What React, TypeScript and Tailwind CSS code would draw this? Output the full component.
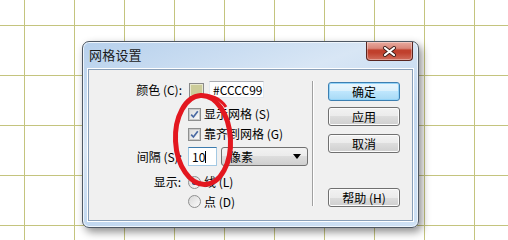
import React from 'react';

const cjk = "font-['SimSun','Noto_Sans_CJK_SC',sans-serif]";

function CheckBox() {
  return (
    <span className="w-[13px] h-[13px] shrink-0 border border-[#8e8f8f] bg-[#f4f4f4] flex items-center justify-center">
      <span className="w-[11px] h-[11px] border border-[#c9c9c9] bg-gradient-to-br from-[#dedede] to-[#f9f9f9] flex items-center justify-center">
        <svg width="9" height="9" viewBox="0 0 9 9">
          <path d="M1.2 4.6 L3.4 7 L7.8 1.2" stroke="#4b6aa3" strokeWidth="1.7" fill="none" />
        </svg>
      </span>
    </span>
  );
}

function Radio({ checked }: { checked?: boolean }) {
  return (
    <span className="w-[13px] h-[13px] shrink-0 rounded-full border border-[#8e8f8f] bg-gradient-to-br from-[#d8d8d8] to-[#fbfbfb] flex items-center justify-center">
      {checked && <span className="w-[5px] h-[5px] rounded-full bg-[#1d3f78]" />}
    </span>
  );
}

function Button({ label, primary }: { label: string; primary?: boolean }) {
  return (
    <div
      className={
        primary
          ? 'w-[72px] h-[19px] rounded-[3px] border border-[#3c7fb1] bg-[linear-gradient(#eaf6fd_0%,#d9f0fc_50%,#bee6fd_50%,#a7d9f5_100%)] shadow-[inset_0_0_0_1px_#94d4f8] flex items-center justify-center text-[12px] leading-none text-black'
          : 'w-[72px] h-[19px] rounded-[3px] border border-[#707070] bg-[linear-gradient(#f2f2f2_0%,#ebebeb_50%,#dddddd_50%,#cfcfcf_100%)] shadow-[inset_0_0_0_1px_#fcfcfc] flex items-center justify-center text-[12px] leading-none text-black'
      }
    >
      {label}
    </div>
  );
}

export default function App() {
  return (
    <div
      className={`relative w-[508px] h-[240px] overflow-hidden bg-white bg-[image:linear-gradient(to_right,#c4c47e_1px,transparent_1px),linear-gradient(to_bottom,#c4c47e_1px,transparent_1px)] bg-[size:50px_50px] bg-[position:24px_25px] pt-[41px] pl-[82px] ${cjk}`}
    >
      {/* dialog window */}
      <div className="w-[337px] h-[187px] rounded-[7px] border border-[#4f5864] bg-[linear-gradient(160deg,#b6d0ec_0%,#d8e6f5_35%,#c2d8f0_60%,#cfe1f4_100%)] shadow-[inset_0_0_0_1px_#eef5fc,3px_4px_9px_rgba(0,0,0,0.45)] flex flex-col">
        {/* title bar */}
        <div className="h-[27px] flex justify-between">
          <div className="pl-[6px] pt-[6px] text-[13px] leading-[14px] tracking-[0.2px] text-[#1a1a1a]">网格设置</div>
          <div className="mr-[5px] w-[47px] h-[19px] rounded-b-[4px] border border-t-0 border-[#5a2520] bg-[linear-gradient(#e8aa9f_0%,#d9877a_35%,#c0402d_45%,#c0402d_60%,#d16d5c_100%)] shadow-[inset_0_0_0_1px_rgba(255,255,255,0.35)] flex items-center justify-center">
            <svg width="15" height="11" viewBox="0 0 15 11">
              <path d="M3 2 L12 9 M12 2 L3 9" stroke="#3d1f1a" strokeWidth="4" strokeLinecap="round" />
              <path d="M3 2 L12 9 M12 2 L3 9" stroke="#ffffff" strokeWidth="2.2" strokeLinecap="round" />
            </svg>
          </div>
        </div>

        {/* client area */}
        <div className="mx-[5px] h-[152px] border border-[#8aa0b9] bg-[#f0f0f0] shadow-[0_0_0_1px_#ffffff] flex text-[12px] leading-none text-black">
          {/* left controls */}
          <div className="w-[223px] flex flex-col">
            <div className="mt-[11px] h-[17px] flex items-center">
              <span className="w-[93px] text-right">颜色 (C):</span>
              <span className="ml-[7px] w-[15px] h-[14px] border border-[#8a8a8a] bg-[#cccc99] shadow-[inset_0_0_0_1px_#e8e8d0]" />
              <span className="ml-[5px] w-[55px] h-[17px] border border-[#e3e9ef] border-t-[#abadb3] bg-white flex items-center pl-[3px]">#CCCC99</span>
            </div>
            <div className="mt-[6px] h-[20px] flex items-center pl-[99px]">
              <CheckBox />
              <span className="ml-[3px]">显示网格 (S)</span>
            </div>
            <div className="h-[20px] flex items-center pl-[99px]">
              <CheckBox />
              <span className="ml-[3px]">靠齐到网格 (G)</span>
            </div>
            <div className="mt-[3px] h-[19px] flex items-center">
              <span className="w-[93px] text-right">间隔 (S):</span>
              <span className="ml-[6px] w-[29px] h-[19px] border border-[#a4c9e3] border-t-[#3d7bad] bg-white flex items-center pl-[3px]">
                10<span className="w-px h-[12px] bg-black" />
              </span>
              <span className="ml-[4px] w-[87px] h-[19px] rounded-[3px] border border-[#707070] bg-[linear-gradient(#f2f2f2_0%,#ebebeb_50%,#dddddd_50%,#cfcfcf_100%)] flex items-center justify-between pl-[7px] pr-[6px]">
                像素
                <svg width="8" height="5" viewBox="0 0 8 5">
                  <path d="M0 0 H8 L4 5 Z" fill="#000" />
                </svg>
              </span>
            </div>
            <div className="mt-[6px] h-[20px] flex items-center">
              <span className="w-[92px] text-right">显示:</span>
              <span className="ml-[7px]"><Radio checked /></span>
              <span className="ml-[3px]">线 (L)</span>
            </div>
            <div className="h-[19px] flex items-center pl-[99px]">
              <Radio />
              <span className="ml-[3px]">点 (D)</span>
            </div>
          </div>

          {/* separator */}
          <div className="mt-[11px] h-[125px] w-[2px] border-l border-[#a0a0a0] bg-white" />

          {/* buttons */}
          <div className="ml-[14px] flex flex-col">
            <div className="mt-[12px]"><Button label="确定" primary /></div>
            <div className="mt-[6px]"><Button label="应用" /></div>
            <div className="mt-[8px]"><Button label="取消" /></div>
            <div className="mt-[35px]"><Button label="帮助 (H)" /></div>
          </div>
        </div>
      </div>

      {/* red hand-drawn annotation */}
      <svg className="absolute left-[170px] top-[89px]" width="66" height="102" viewBox="0 0 66 102">
        <ellipse cx="33" cy="51" rx="27.5" ry="44.5" transform="rotate(-3 33 51)" fill="none" stroke="#e3171f" strokeWidth="5" />
        <path d="M30 7 C40 5 50 9 56 18" fill="none" stroke="#e3171f" strokeWidth="3" />
      </svg>
    </div>
  );
}
